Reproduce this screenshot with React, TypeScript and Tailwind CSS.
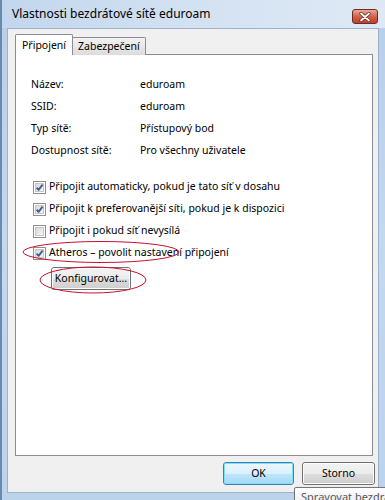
import React from "react";

const font = { fontFamily: '"Noto Sans", "Liberation Sans", sans-serif' };

function CheckBox({ checked }: { checked: boolean }) {
  return (
    <div className="w-[13px] h-[13px] border border-[#8e8f8f] bg-white p-[1px] shrink-0">
      <div className="w-full h-full bg-gradient-to-br from-[#d9dadb] to-[#f6f6f6] border border-[#c6c6c6] relative">
        {checked && (
          <svg width="9" height="9" viewBox="0 0 9 9" className="absolute -left-[1px] -top-[1px]">
            <path d="M1.6 4.6 L3.6 6.9 L7.6 1.6" fill="none" stroke="#3d5a92" strokeWidth="1.8" strokeLinejoin="round" />
          </svg>
        )}
      </div>
    </div>
  );
}

function WinButton({ children, def, className }: { children: React.ReactNode; def?: boolean; className?: string }) {
  return (
    <div
      className={
        "h-[23px] rounded-[3px] border flex items-center justify-center text-[10.5px] text-black relative overflow-hidden " +
        (def ? "border-[#3c7fb1] " : "border-[#707070] ") +
        (className ?? "")
      }
    >
      <div className={"absolute inset-0 flex flex-col rounded-[2px] border " + (def ? "border-[#48d8fb]/70" : "border-white/80")}>
        <div className={"flex-1 " + (def ? "bg-gradient-to-b from-[#eaf6fd] to-[#d9f0fc]" : "bg-gradient-to-b from-[#f2f2f2] to-[#ebebeb]")} />
        <div className={"flex-1 " + (def ? "bg-gradient-to-b from-[#bee6fd] to-[#a7d9f5]" : "bg-gradient-to-b from-[#dddddd] to-[#cfcfcf]")} />
      </div>
      <span className="relative leading-none whitespace-nowrap">{children}</span>
    </div>
  );
}

export default function App() {
  const rows: [string, string][] = [
    ["Název:", "eduroam"],
    ["SSID:", "eduroam"],
    ["Typ sítě:", "Přístupový bod"],
    ["Dostupnost sítě:", "Pro všechny uživatele"],
  ];
  const checks: [boolean, string][] = [
    [true, "Připojit automaticky, pokud je tato síť v dosahu"],
    [true, "Připojit k preferovanější síti, pokud je k dispozici"],
    [false, "Připojit i pokud síť nevysílá"],
    [true, "Atheros – povolit nastavení připojení"],
  ];
  return (
    <div
      className="w-[385px] h-[500px] relative overflow-hidden flex flex-col bg-gradient-to-b from-[#b8cfe9] via-[#c4d8ee] to-[#bcd3ec] border-l-2 border-[#6a89b0]"
      style={font}
    >
      {/* title bar */}
      <div className="h-[28px] flex items-start justify-between pl-[10px] pr-[7px] shrink-0 bg-gradient-to-r from-[#c2d6ed] via-[#d3e2f2] to-[#dfe9f5]">
        <span className="text-[12px] text-black mt-[8px] leading-none">Vlastnosti bezdrátové sítě eduroam</span>
        <div className="mt-[9px] w-[26px] h-[15px] rounded-[3px] border border-[#6f2b20] bg-gradient-to-b from-[#e9a99a] via-[#d2604a] to-[#c0402a] flex items-center justify-center">
          <svg width="12" height="10" viewBox="0 0 12 10">
            <path d="M2 1.5 L10 8.5 M10 1.5 L2 8.5" stroke="#5a2a22" strokeWidth="3.2" strokeLinecap="round" />
            <path d="M2 1.5 L10 8.5 M10 1.5 L2 8.5" stroke="#ffffff" strokeWidth="1.8" strokeLinecap="round" />
          </svg>
        </div>
      </div>

      {/* body */}
      <div className="flex-1 ml-[5px] mr-[6px] mb-[7px] bg-[#f0f0f0] border border-[#9bb2cf] flex flex-col pl-[7px] pr-[4px] pt-[5px] text-[10.5px]">
        {/* tabs */}
        <div className="flex items-end h-[21px] relative z-10 -mb-[1px]">
          <div className="h-[21px] bg-white border border-b-0 border-[#898c95] rounded-t-[2px] px-[6px] flex items-start pt-[3px] text-black">
            <span className="leading-[14px]">Připojení</span>
          </div>
          <div className="h-[18px] bg-gradient-to-b from-[#f2f2f2] to-[#dcdcdc] border border-l-0 border-b-0 border-[#898c95] rounded-tr-[2px] px-[5px] flex items-start pt-[1px] text-black">
            <span className="leading-[14px]">Zabezpečení</span>
          </div>
        </div>

        {/* panel */}
        <div className="h-[402px] mr-[1px] bg-white border border-[#898c95] relative flex flex-col pl-[15px] pt-[19px]">
          {rows.map(([k, v]) => (
            <div key={k} className="h-[22px] flex items-center text-black">
              <span className="w-[109px]">{k}</span>
              <span>{v}</span>
            </div>
          ))}
          <div className="h-[14px]" />
          {checks.map(([c, t]) => (
            <div key={t} className="h-[22px] flex items-center gap-[3px] pl-[2px] text-black">
              <CheckBox checked={c} />
              <span>{t}</span>
            </div>
          ))}
          <div className="pl-[20px] mt-[3px]">
            <WinButton className="w-[80px]">Konfigurovat...</WinButton>
          </div>

          {/* red annotation ellipses */}
          <svg className="absolute left-0 top-0 pointer-events-none" width="358" height="402">
            <ellipse cx="85" cy="197" rx="78" ry="10.5" fill="none" stroke="#c8102e" strokeWidth="1" />
            <ellipse cx="77" cy="225" rx="53" ry="13" fill="none" stroke="#c8102e" strokeWidth="1" />
          </svg>
        </div>

        {/* buttons */}
        <div className="flex justify-end gap-[8px] mt-[6px] -mr-[1px]">
          <WinButton def className="w-[71px]">OK</WinButton>
          <WinButton className="w-[73px]">Storno</WinButton>
        </div>
      </div>

      {/* tooltip */}
      <div className="absolute left-[292px] top-[487px] w-[140px] h-[24px] border border-[#767676] rounded-[2px] bg-gradient-to-b from-[#ffffff] to-[#e4e5f0] pl-[6px] pt-[1px] text-[11px] text-[#575757] whitespace-nowrap shadow-[1px_1px_2px_rgba(0,0,0,0.3)]">
        Spravovat bezdrátové sítě
      </div>
    </div>
  );
}
